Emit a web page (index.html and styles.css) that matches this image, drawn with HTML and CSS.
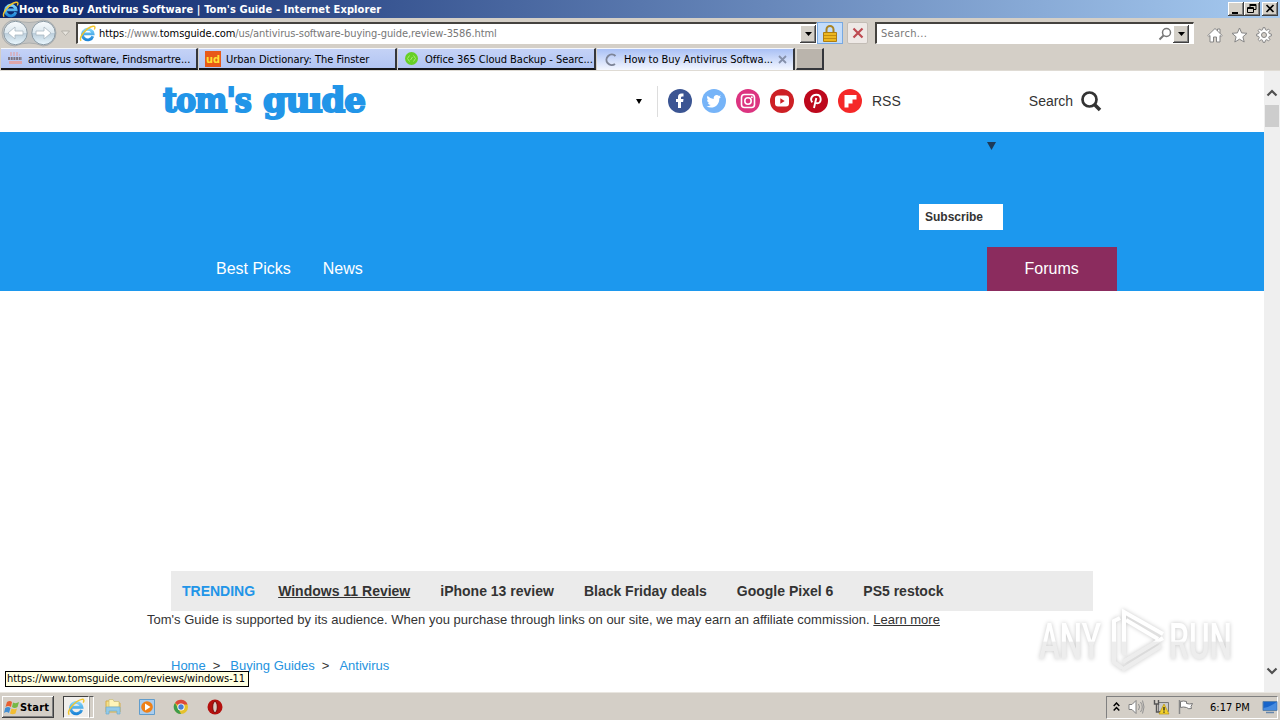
FILE: index.html
```
<!DOCTYPE html>
<html lang="en">
<head>
    <meta charset="UTF-8">
    <meta name="viewport" content="width=device-width, initial-scale=1.0">
    <title>How to Buy Antivirus Software | Tom's Guide</title>
    <link rel="stylesheet" href="styles.css">
</head>
<body>
    <svg class="defs" width="0" height="0">
        <defs>
            <linearGradient id="blueE" x1="0" y1="0" x2="0" y2="1">
                <stop offset="0" stop-color="#7fd3fa"/>
                <stop offset="1" stop-color="#1e86d8"/>
            </linearGradient>
            <linearGradient id="ball" x1="0" y1="0" x2="0" y2="1">
                <stop offset="0" stop-color="#f8fbfd"/>
                <stop offset=".48" stop-color="#dde8ef"/>
                <stop offset=".52" stop-color="#bccedb"/>
                <stop offset="1" stop-color="#eaf8ff"/>
            </linearGradient>
            <linearGradient id="fade" gradientUnits="userSpaceOnUse" x1="0" y1="0" x2="0" y2="72">
                <stop offset=".5" stop-color="#fff"/>
                <stop offset=".52" stop-color="#ededed"/>
            </linearGradient>
            <symbol id="ie" viewBox="0 0 16 16">
                <path d="M13 10.600A5 5 0 1 1 13.200 8.300H4.500" fill="none" stroke="url(#blueE)" stroke-width="2.700"/>
                <path d="M2 14.800C-.6 12.200 6.500 2.600 13.200 1.200c2-.3 2.200 1.200 1.200 3" fill="none" stroke="#f2c52c" stroke-width="1.300"/>
            </symbol>
        </defs>
    </svg>

    <div class="titlebar">
        <svg class="title-icon" width="17" height="17"><use href="#ie"/></svg>
        <span class="title-text">How to Buy Antivirus Software | Tom's Guide - Internet Explorer</span>
        <div class="window-buttons">
            <span class="win-btn"><svg width="16" height="14"><path d="M4 10h6v2H4z"/></svg></span>
            <span class="win-btn"><svg width="16" height="14"><path d="M6 2.500h6v5h-2M6 3.500h6M6 2v3M3.500 5.500h6v5h-6zM3 6.500h7" fill="none" stroke="#000"/></svg></span>
            <span class="win-btn close"><svg width="16" height="14"><path d="M4.500 3l7 7M11.500 3l-7 7" stroke="#000" stroke-width="1.700"/></svg></span>
        </div>
    </div>

    <div class="navbar">
        <svg class="nav-arrows" width="74" height="30" viewBox="0 0 74 30">
            <path d="M15 2Q29 7 43 2a13 13 0 0 1 0 26Q29 22 15 28a13 13 0 0 1 0-26z" fill="#c3c4c3" stroke="#adafaf"/>
            <circle cx="15.500" cy="15" r="11.700" fill="url(#ball)" stroke="#8c9ba5"/>
            <circle cx="43.500" cy="15" r="11.700" fill="url(#ball)" stroke="#8c9ba5"/>
            <path d="M8 15l7-6v4h8v4h-8v4zM51 15l-7-6v4h-8v4h8v4z" fill="#fff" stroke="#a9b8c1" stroke-width=".8"/>
            <path d="M61.500 13h8l-4 4.500z" fill="#e8e5df" stroke="#aaa7a0" stroke-width=".8"/>
        </svg>
        <div class="address">
            <svg width="17" height="17"><use href="#ie"/></svg>
            <span class="url"><b>https</b>://www.<b>tomsguide.com</b>/us/antivirus-software-buying-guide,review-3586.html</span>
            <span class="drop"><svg width="7" height="4"><path d="M0 0h7L3.500 4z"/></svg></span>
        </div>
        <span class="lock">
            <svg width="14" height="17"><path d="M3.500 8V4.500a3.500 3.500 0 0 1 7 0V8" fill="none" stroke="#a98322" stroke-width="2"/><path d="M.5 7.500h13v9H.5z" fill="#edb71e" stroke="#ad7d11"/><path d="M1 10.500h12M1 13.500h12" stroke="#c38c0e"/></svg>
        </span>
        <span class="stop">
            <svg width="12" height="12"><path d="M1.500 1.500l9 9M10.500 1.500l-9 9" stroke="#bd4b52" stroke-width="2.200"/></svg>
        </span>
        <div class="searchbox">
            <span>Search...</span>
            <svg width="14" height="14"><circle cx="8.500" cy="5.500" r="4" fill="none" stroke="#777" stroke-width="1.500"/><path d="M5.500 8.500L1.500 12.500" stroke="#777" stroke-width="2"/></svg>
            <span class="drop"><svg width="7" height="4"><path d="M0 0h7L3.500 4z"/></svg></span>
        </div>
        <div class="tools">
            <svg width="16" height="16"><path d="M.8 8.500L8 1.500l7.200 7-1 1-1.200-1V15H9.500v-5h-3v5H3V8.500l-1.200 1zM10.500 4V2H13v4.300" fill="#fff" stroke="#858585"/></svg>
            <svg width="17" height="16"><path d="M8.500 1l2.100 4.900 5.400.4-4.100 3.500 1.300 5.200-4.700-2.800L3.800 15l1.300-5.200L1 6.300l5.400-.4z" fill="#fff" stroke="#858585"/></svg>
            <svg width="16" height="16"><path d="M7 .7h2l.4 2 1.400.6 1.700-1.200 1.400 1.400-1.200 1.700.6 1.400 2 .4v2l-2 .4-.6 1.400 1.200 1.700-1.400 1.400-1.700-1.200-1.400.6-.4 2H7l-.4-2-1.400-.6-1.700 1.200-1.400-1.400 1.200-1.700-.6-1.400-2-.4V7l2-.4.6-1.400-1.200-1.700 1.400-1.400 1.700 1.200 1.400-.6z" fill="#fff" stroke="#858585"/><circle cx="8" cy="8" r="2.500" fill="#d4cfc7" stroke="#858585"/></svg>
        </div>
    </div>

    <div class="tabs">
        <div class="tab">
            <svg width="16" height="16"><path d="M3 2h9M3 4h10" stroke="#e59a98" stroke-dasharray="2 1"/><path d="M1 7.500h14" stroke="#7d7480" stroke-width="3" stroke-dasharray="2 .7"/><path d="M2 11.500h13" stroke="#dea6aa" stroke-width="3"/></svg>
            <span>antivirus software, Findsmartre...</span>
        </div>
        <div class="tab">
            <svg width="16" height="16"><path d="M0 0h16v16H0z" fill="#e85918"/><text class="ud" x="1" y="12" textLength="14" lengthAdjust="spacingAndGlyphs">ud</text></svg>
            <span>Urban Dictionary: The Finster</span>
        </div>
        <div class="tab">
            <svg width="16" height="16"><circle cx="7.500" cy="7.500" r="6.500" fill="#66cf26"/><path d="M5.500 4.500l-2 3 2 3M9.500 4.500l2 3-2 3M6.500 9l2-3" fill="none" stroke="#a9ec70"/></svg>
            <span>Office 365 Cloud Backup - Searc...</span>
        </div>
        <div class="tab active">
            <svg width="16" height="16"><path d="M12.500 4A5.300 5.300 0 1 0 12 12" fill="none" stroke="#7d8497" stroke-width="2"/></svg>
            <span>How to Buy Antivirus Softwa...</span>
            <svg class="tab-close" width="9" height="9"><path d="M1 1l7 7M8 1L1 8" stroke="#8590aa" stroke-width="1.800"/></svg>
        </div>
        <div class="new-tab"></div>
    </div>

    <div class="viewport">
        <div class="page">
            <header class="header">
                <svg class="logo" width="206" height="56">
                    <text x="1" y="36.500" textLength="88" lengthAdjust="spacingAndGlyphs">tom's</text>
                    <text x="101" y="36.500" textLength="102" lengthAdjust="spacingAndGlyphs">guıde</text>
                </svg>
                <span class="region-arrow"><svg width="6" height="5"><path d="M0 0h6L3 5z"/></svg></span>
                <div class="social">
                    <svg width="24" height="24"><circle cx="12" cy="12" r="12" fill="#3b5593"/><path d="M10 19v-6H8v-3h2V8q0-3.500 3.500-3.500h2v3h-1.300Q13 7.500 13 8.700V10h2.500l-.4 3H13v6z" fill="#fff"/></svg>
                    <svg width="24" height="24"><circle cx="12" cy="12" r="12" fill="#76b4f8"/><path d="M19 8q-1 1-1.700 1.400C17.500 15 13.500 18.500 9 18.500q-2.500 0-4.500-1.300 2.500.1 4.200-1.200-2-.3-2.800-2.100h1.300Q5 13 5 10.500l1.300.4Q4.200 9 5.400 6.700 8 9.600 11.700 9.900C11.100 6.300 15 4.800 17 7l1.900-.7-1.200 1.700z" fill="#fff"/></svg>
                    <svg width="24" height="24"><circle cx="12" cy="12" r="12" fill="#dc3480"/><g fill="none" stroke="#fff" stroke-width="1.600"><rect x="5.500" y="5.500" width="13" height="13" rx="3"/><circle cx="12" cy="12" r="3.200"/></g><circle cx="15.800" cy="8.200" r="1" fill="#fff"/></svg>
                    <svg width="24" height="24"><circle cx="12" cy="12" r="12" fill="#cd2025"/><rect x="5" y="6.500" width="14" height="11" rx="3" fill="#fff"/><path d="M10.300 9.200v5.600l4.400-2.800z" fill="#cd2025"/></svg>
                    <svg width="24" height="24"><circle cx="12" cy="12" r="12" fill="#bd081c"/><path d="M8.300 13.300C5.500 10 8 5.700 12.300 5.700c5.700 0 5.700 8.600 1 8.600-1.200 0-2-.6-2.300-1.300M12.300 9L10 19" fill="none" stroke="#fff" stroke-width="1.900"/></svg>
                    <svg width="24" height="24"><circle cx="12" cy="12" r="12" fill="#f52828"/><path d="M6.500 6h12v4.500h-4v4h-4v4h-4z" fill="#fff"/></svg>
                </div>
                <span class="rss">RSS</span>
                <span class="search">Search</span>
                <svg class="search-icon" width="21" height="21"><circle cx="8.500" cy="8.500" r="7" fill="none" stroke="#333" stroke-width="2.700"/><path d="M13.500 13.500l5.500 5.500" stroke="#333" stroke-width="3.600"/></svg>
            </header>

            <div class="banner">
                <div class="banner-arrow"><svg width="9" height="8"><path d="M0 0h9L4.500 8z" fill="#1d3a57"/></svg></div>
                <a class="subscribe">Subscribe</a>
                <nav class="main-nav">
                    <a class="picks">Best Picks</a>
                    <a class="news">News</a>
                    <a class="forums">Forums</a>
                </nav>
            </div>

            <div class="trending">
                <span class="trending-label">TRENDING</span>
                <a class="hovered">Windows 11 Review</a>
                <a>iPhone 13 review</a>
                <a>Black Friday deals</a>
                <a>Google Pixel 6</a>
                <a>PS5 restock</a>
            </div>
            <p class="affiliate">Tom's Guide is supported by its audience. When you purchase through links on our site, we may earn an affiliate commission. <a>Learn more</a></p>
            <div class="breadcrumb">
                <a>Home</a><span>&gt;</span><a>Buying Guides</a><span>&gt;</span><a>Antivirus</a>
            </div>
        </div>
        <div class="scrollbar">
            <svg width="16" height="14"><path d="M3.500 9.500L8 5l4.500 4.500" fill="none" stroke="#505050" stroke-width="2.200"/></svg>
            <div class="thumb"></div>
            <svg class="down" width="16" height="14"><path d="M3.500 4.500L8 9l4.500-4.500" fill="none" stroke="#505050" stroke-width="2.200"/></svg>
        </div>
        <div class="status">https://www.tomsguide.com/reviews/windows-11</div>
        <svg class="watermark" width="212" height="76" viewBox="0 0 212 76">
            <text x="5" y="54" textLength="62" lengthAdjust="spacingAndGlyphs">ANY</text>
            <text x="135" y="54" textLength="63" lengthAdjust="spacingAndGlyphs">RUN</text>
            <g class="mark" fill="none">
                <path d="M90 50V7l39 22M92 15l32 19"/>
                <path d="M86 13l-6 3v41l8 6M129 33L89 57M127 41L88 65"/>
            </g>
        </svg>
    </div>

    <div class="taskbar">
        <div class="start">
            <svg width="15" height="15"><path d="M3 2q3-2 5 0L7 7Q4 5 1.500 7z" fill="#e86031"/><path d="M9 2.500q3 1.500 6-.5l-1.500 5q-3 2-5.500 0z" fill="#75b844"/><path d="M1.200 8q3-2 5.300 0L5 13q-2.500-2-5 0z" fill="#418ed3"/><path d="M7.500 8.500q3 1.500 5.500 0l-1.500 5q-3 1.500-5.500 0z" fill="#f2bd32"/></svg>
            <span>Start</span>
        </div>
        <div class="task-ie"><svg width="18" height="18"><use href="#ie"/></svg></div>
        <div class="task-ie-more"></div>
        <div class="pinned">
            <svg width="18" height="18"><path d="M2 3h6l1 2h7v9H2z" fill="#f5df86" stroke="#d5ad4b"/><path d="M5 1.500h4l1 2h5V9H5z" fill="#fff4b9" stroke="#c8bd79" stroke-width=".7"/><path d="M2 9h14v7h-3v-3H5v3H2z" fill="#93cae8" stroke="#6eadd0" stroke-width=".7"/></svg>
            <svg width="18" height="18"><path d="M1.500 1.500h15v15h-15z" fill="#aacdee" stroke="#619dcc"/><circle cx="9" cy="9" r="5.800" fill="#ef8017"/><path d="M7 5.500v7L12.500 9z" fill="#fff"/></svg>
            <svg width="18" height="18"><circle cx="9" cy="9" r="7" fill="#e5c12b"/><path d="M9 9L3 5a7 7 0 0 1 12.500 1.500H9z" fill="#dc493b"/><path d="M3 5l4 7 2 4A7 7 0 0 1 3 5z" fill="#3e9c4b"/><circle cx="9" cy="9" r="3.600" fill="#fff"/><circle cx="9" cy="9" r="2.700" fill="#477fd5"/></svg>
            <svg width="18" height="18"><circle cx="9" cy="9" r="7.500" fill="#b4100e"/><ellipse cx="9" cy="9" rx="2.300" ry="5.600" fill="#d9ccc4" stroke="#770908"/></svg>
        </div>
        <div class="tray">
            <svg width="7" height="10"><path d="M.7 4l2.800-3L6.300 4M.7 8.500l2.800-3 2.800 3" fill="none" stroke="#000" stroke-width="1.500"/></svg>
            <svg width="17" height="16"><path d="M1 5.500h3l4-4v13l-4-4H1z" fill="#fff" stroke="#808080"/><path d="M10.500 5q2 3 0 6M12.500 3q3.500 5 0 10M14.500 1.500q3 6.500 0 13" fill="none" stroke="#919191"/></svg>
            <svg width="17" height="16"><path d="M5.500 3.500h10v9h-10z" fill="#c9c9c9" stroke="#777"/><path d="M1.500 1v4h4V1M3.500 5v8h4" fill="none" stroke="#555" stroke-width="1.400"/><path d="M11 5l5 10H6z" fill="#f3d12a" stroke="#b8940f" stroke-width=".7"/><path d="M11 8v3.500M11 12.500v1.300" stroke="#222" stroke-width="1.300"/></svg>
            <svg width="17" height="16"><path d="M1.500 1v14" stroke="#888" stroke-width="1.500"/><path d="M2.500 2.500q3-1 6 0v2q3 1 6 0l-1.500 3 .5 2q-3 1-5-1-3-1-6 0z" fill="#fff" stroke="#777"/></svg>
            <span class="clock">6:17 PM</span>
            <svg width="16" height="14"><path d="M1 1.500h14v9H1z" fill="#1764ca" stroke="#5a82ac"/><path d="M1.500 8Q8 7 14.500 2v8h-13z" fill="#468bdf"/><path d="M4 12.500h8" stroke="#6686ab" stroke-width="1.500"/></svg>
        </div>
    </div>
</body>
</html>
```
FILE: styles.css
```
* {
    box-sizing: border-box;
}
body {
    margin: 0;
    width: 1280px;
    height: 720px;
    overflow: hidden;
    display: flex;
    flex-direction: column;
    background: #d4cfc7;
    font-family: "DejaVu Sans Condensed", "DejaVu Sans", sans-serif;
    font-stretch: condensed;
    font-size: 11px;
    color: #000;
    white-space: nowrap;
}
svg {
    display: block;
    flex: none;
}
.defs {
    position: absolute;
}

/* window chrome */
.titlebar {
    height: 18px;
    display: flex;
    align-items: center;
    padding: 0 2px;
    background: linear-gradient(90deg, #0a246a, #a6caf0);
    color: #fff;
}
.title-text {
    font-weight: bold;
    letter-spacing: 0.1px;
}
.window-buttons {
    margin-left: auto;
    display: flex;
}
.win-btn {
    width: 16px;
    height: 14px;
    background: #d4d0c8;
    box-shadow: inset -1px -1px #404040, inset 1px 1px #fff, inset -2px -2px #808080;
}
.win-btn.close {
    margin-left: 2px;
}
.navbar {
    height: 30px;
    display: flex;
    align-items: center;
}
.address,
.searchbox {
    height: 22px;
    display: flex;
    align-items: center;
    background: #fff;
    border: 1px solid #fff;
    border-top: 2px solid #45433f;
    border-left: 2px solid #45433f;
    color: #777;
}
.address {
    width: 741px;
    margin-left: 2px;
    padding-left: 1px;
}
.url {
    margin-left: 3px;
    letter-spacing: -0.09px;
}
.url b {
    font-weight: normal;
    color: #000;
}
.drop {
    width: 16px;
    height: 18px;
    display: flex;
    align-items: center;
    justify-content: center;
    background: #d4d0c8;
    box-shadow: inset -1px -1px #404040, inset 1px 1px #fff, inset -2px -2px #808080;
}
.address .drop {
    margin-left: auto;
}
.lock,
.stop {
    height: 22px;
    display: flex;
    align-items: center;
    justify-content: center;
}
.lock {
    width: 26px;
    background: #c3dcfa;
    border: 1px solid #78a9e2;
}
.stop {
    width: 21px;
    margin-left: 4px;
    background: #eee9e6;
    border: 1px solid #c3bdb6;
    border-radius: 2px;
}
.searchbox {
    width: 319px;
    margin-left: 7px;
    padding: 0 4px 0 4px;
    gap: 1px;
    letter-spacing: 0.3px;
}
.searchbox > svg {
    margin-left: auto;
}
.tools {
    display: flex;
    align-items: center;
    gap: 8px;
    margin: 3px 0 0 13px;
}
.tabs {
    height: 23px;
    display: flex;
    padding-left: 1px;
    border-bottom: 1px solid #dfdbd4;
}
.tab {
    width: 198px;
    height: 22px;
    margin-right: 1px;
    display: flex;
    align-items: center;
    gap: 5px;
    padding: 1px 2px 0 6px;
    background: linear-gradient(#c4d2f6, #b2c5f3);
    border-top: 1px solid #f5f7fb;
    border-right: 2px solid #34363b;
    border-bottom: 2px solid #15161a;
    letter-spacing: -0.03px;
}
.tab:first-child {
    width: 197px;
}
.tab.active {
    padding-top: 0;
    background: linear-gradient(#a9c0f5, #f4f7ff);
    border-bottom: 0;
}
.tab-close {
    margin-left: auto;
    margin-right: 4px;
}
.new-tab {
    width: 28px;
    height: 22px;
    background: #bab4ac;
    border: 1px solid #ded9d1;
    border-right: 2px solid #34363b;
    border-bottom: 2px solid #34363b;
}
.ud {
    font-size: 11px;
    font-weight: bold;
    fill: #ffe135;
}

/* page */
.viewport {
    position: relative;
    height: 621px;
    display: flex;
    background: #fff;
    font-family: "Liberation Sans", Arial, sans-serif;
    font-stretch: normal;
    color: #333;
}
.page {
    width: 1264px;
}
.header {
    height: 61px;
    display: flex;
    align-items: center;
    padding: 0 0 1px 162px;
    font-size: 14px;
}
.logo {
    margin-top: 4px;
}
.logo text {
    font: bold 33px "DejaVu Serif", serif;
    letter-spacing: -1px;
    fill: #2295e8;
    stroke: #2295e8;
    stroke-width: 2px;
}
.region-arrow {
    width: 290px;
    height: 31px;
    display: flex;
    align-items: center;
    justify-content: flex-end;
    padding-right: 15px;
    border-right: 1px solid #ddd;
    color: #000;
}
.social {
    display: flex;
    gap: 10px;
    margin-left: 10px;
}
.rss {
    margin-left: 10px;
}
.search {
    margin-left: 128px;
}
.search-icon {
    margin-left: 8px;
}
.banner {
    height: 159px;
    display: flex;
    flex-direction: column;
    background: #1c98ee;
}
.banner-arrow {
    height: 72px;
    padding: 10px 0 0 987px;
}
.subscribe {
    width: 84px;
    height: 26px;
    margin-left: 919px;
    padding-left: 6px;
    background: #fff;
    font-size: 12px;
    font-weight: bold;
    line-height: 26px;
}
.main-nav {
    height: 44px;
    margin-top: auto;
    display: flex;
    padding-left: 216px;
    font-size: 16px;
    line-height: 43px;
    color: #fff;
}
.news {
    margin-left: 32px;
}
.forums {
    width: 130px;
    margin-left: 624px;
    background: #8b2c5e;
    text-align: center;
}
.trending {
    width: 922px;
    height: 40px;
    margin: 280px 0 0 171px;
    padding-left: 11px;
    display: flex;
    align-items: center;
    gap: 30px;
    background: #ebebeb;
    font-size: 14px;
    font-weight: bold;
}
.trending-label {
    margin-right: -7px;
    color: #2295e8;
}
.hovered {
    text-decoration: underline;
}
.affiliate {
    margin: 0 0 0 147px;
    font-size: 13px;
    line-height: 18px;
    letter-spacing: 0.012px;
}
.affiliate a {
    text-decoration: underline;
}
.breadcrumb {
    display: flex;
    margin: 28px 0 0 171px;
    font-size: 13px;
    line-height: 18px;
}
.breadcrumb a {
    color: #2593e0;
}
.breadcrumb span {
    margin: 0 10px 0 7px;
}
.scrollbar {
    width: 16px;
    display: flex;
    flex-direction: column;
    padding-top: 15px;
    background: #efefef;
}
.thumb {
    width: 14px;
    height: 22px;
    margin: 5px 0 0 1px;
    background: #cdcdcd;
}
.down {
    margin-top: auto;
    margin-bottom: 14px;
}
.status {
    position: absolute;
    left: 5px;
    top: 600px;
    width: 244px;
    height: 16px;
    padding-left: 1px;
    border: 1px solid #000;
    background: #ffffe1;
    color: #000;
    font: 11px/14px "DejaVu Sans Condensed", "DejaVu Sans", sans-serif;
    font-stretch: condensed;
    letter-spacing: -0.09px;
}
.watermark {
    position: absolute;
    left: 1034px;
    top: 534px;
    filter: drop-shadow(0 0 2px rgba(0, 0, 0, 0.22));
}
.watermark text {
    font: 500 50px Roboto, sans-serif;
    fill: url(#fade);
}
.mark {
    stroke: url(#fade);
    stroke-width: 4px;
}

/* taskbar */
.taskbar {
    height: 28px;
    display: flex;
    align-items: center;
    padding: 1px 2px 0;
    border-top: 1px solid #e9e6e0;
}
.start {
    width: 52px;
    height: 22px;
    display: flex;
    align-items: center;
    gap: 1px;
    padding-left: 2px;
    font-weight: bold;
    box-shadow: inset -1px -1px #404040, inset 1px 1px #fff, inset -2px -2px #808080;
}
.start span {
    letter-spacing: 0.2px;
}
.task-ie {
    width: 26px;
    height: 22px;
    margin-left: 9px;
    padding: 1px 0 0 3px;
    background: #f1efec;
    border: 1px solid #fff;
    border-top-color: #404040;
    border-left-color: #404040;
}
.task-ie-more {
    width: 5px;
    height: 22px;
    border: 1px solid #fff;
    border-top-color: #555;
    border-left-color: #999;
}
.pinned {
    display: flex;
    gap: 16px;
    margin-left: 10px;
}
.tray {
    width: 172px;
    height: 23px;
    margin-left: auto;
    display: flex;
    align-items: center;
    padding-left: 6px;
    gap: 8px;
    border: 1px solid #fff;
    border-top-color: #808080;
    border-left-color: #808080;
}
.clock {
    width: 42px;
    margin: 0 4px 0 7px;
}
```
